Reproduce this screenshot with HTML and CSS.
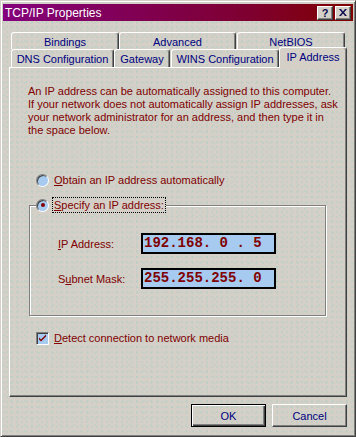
FILE: index.html
```html
<!DOCTYPE html>
<html>
<head>
<meta charset="utf-8">
<link rel="stylesheet" href="styles.css">
</head>
<body>
<div class="window">
  <div class="titlebar">
    <span class="title">TCP/IP Properties</span>
    <div class="tbtns">
      <span class="tbtn help">?</span>
      <span class="tbtn close"><svg width="8" height="7" viewBox="0 0 8 7"><path d="M0 0h2l2 2.5L6 0h2L5 3.5 8 7H6L4 4.5 2 7H0l3-3.5z" fill="#0a0a50"/></svg></span>
    </div>
  </div>
  <div class="content">
    <div class="tabs">
      <div class="tabrow back">
        <div class="tab t-bind">Bindings</div>
        <div class="tab t-adv">Advanced</div>
        <div class="tab t-net">NetBIOS</div>
      </div>
      <div class="tabrow front">
        <div class="tab t-dns">DNS Configuration</div>
        <div class="tab t-gw">Gateway</div>
        <div class="tab t-wins">WINS Configuration</div>
        <div class="tab t-ip sel">IP Address</div>
      </div>
    </div>
    <div class="panel">
      <p class="desc">An IP address can be automatically assigned to this computer.<br>If your network does not automatically assign IP addresses, ask<br>your network administrator for an address, and then type it in<br>the space below.</p>
      <div class="option">
        <span class="radio"></span>
        <span class="otext"><u>O</u>btain an IP address automatically</span>
      </div>
      <div class="group">
        <div class="legend">
          <span class="radio on"><span class="dot"></span></span>
          <span class="otext focus"><u>S</u>pecify an IP address:</span>
        </div>
        <div class="field first">
          <span class="lbl"><u>I</u>P Address:</span>
          <span class="ipbox">192.168. 0 . 5</span>
        </div>
        <div class="field">
          <span class="lbl">S<u>u</u>bnet Mask:</span>
          <span class="ipbox">255.255.255. 0</span>
        </div>
      </div>
      <div class="option check-row">
        <span class="check"><svg width="9" height="9" viewBox="0 0 9 9"><path d="M1 3.5l2 2 5-5v2l-5 5-2-2z" fill="#800000"/></svg></span>
        <span class="otext"><u>D</u>etect connection to network media</span>
      </div>
    </div>
    <div class="buttons">
      <div class="btn default"><span class="btn-in">OK</span></div>
      <div class="btn"><span class="btn-in">Cancel</span></div>
    </div>
  </div>
</div>
</body>
</html>
```

FILE: styles.css
```css
* { box-sizing: border-box; }
html, body { margin: 0; padding: 0; }
body {
  width: 356px;
  height: 437px;
  overflow: hidden;
  font-family: "Liberation Sans", Arial, sans-serif;
  font-size: 11px;
  background: #d4d0c8;
}
.window {
  width: 356px;
  height: 437px;
  border: 1px solid;
  border-color: #d4d0c8 #404040 #404040 #d4d0c8;
  box-shadow: inset 1px 1px #ffffff, inset -1px -1px #808080;
  padding: 3px 2px 2px 2px;
  display: flex;
  flex-direction: column;
  background-color: #d4d0c8;
  background-image:
    radial-gradient(circle at 1px 1px, rgba(120, 200, 190, 0.18) 0.7px, transparent 0.9px),
    radial-gradient(circle at 3px 4px, rgba(120, 200, 190, 0.15) 0.7px, transparent 0.9px);
  background-size: 5px 5px, 7px 6px;
}
.titlebar {
  height: 17px;
  background: linear-gradient(to right, #84007c, #7e0030 70%, #800000);
  display: flex;
  align-items: center;
  justify-content: space-between;
  padding: 0 2px 0 2px;
}
.title {
  color: #ffffff;
  font-size: 12px;
  line-height: 14px;
}
.tbtns { display: flex; gap: 2px; }
.tbtn {
  width: 16px;
  height: 14px;
  background: #d4d0c8;
  border: 1px solid;
  border-color: #ffffff #404040 #404040 #ffffff;
  box-shadow: inset -1px -1px #808080;
  display: flex;
  align-items: center;
  justify-content: center;
  color: #0a0a50;
  font-weight: bold;
  font-size: 11px;
  line-height: 12px;
}
.content {
  flex: 1;
  display: flex;
  flex-direction: column;
  padding: 0 6px;
}
.tabs {
  margin-top: 11px;
  display: flex;
  flex-direction: column;
}
.tabrow {
  display: flex;
  align-items: flex-end;
  padding-left: 2px;
}
.back { height: 17px; }
.front { height: 18px; }
.tab {
  height: 100%;
  border-top: 1px solid #ffffff;
  border-left: 1px solid #ffffff;
  border-right: 1px solid #404040;
  border-radius: 3px 3px 0 0;
  box-shadow: inset -1px 0 #808080;
  color: #000080;
  display: flex;
  align-items: center;
  justify-content: center;
  font-size: 11px;
  padding-top: 1px;
  background: transparent;
  white-space: nowrap;
}
.t-bind { width: 108px; }
.t-adv { width: 117px; }
.t-net { width: 108px; margin-left: 1px; }
.t-dns { width: 103px; }
.t-gw { width: 56px; }
.t-wins { width: 108px; margin-left: 1px; }
.t-ip { width: 68px; }
.tab.sel {
  height: 21px;
  margin-bottom: -1px;
  position: relative;
  z-index: 1;
  background-color: #d4d0c8;
  padding-bottom: 3px;
}
.panel {
  height: 330px;
  border: 1px solid;
  border-color: #ffffff #404040 #404040 #ffffff;
  box-shadow: inset -1px -1px #808080;
  padding: 17px 18px 0 18px;
  display: flex;
  flex-direction: column;
  align-items: flex-start;
}
.desc {
  margin: 0;
  color: #800000;
  line-height: 13px;
  font-size: 11px;
  white-space: nowrap;
}
.option {
  display: flex;
  align-items: center;
  height: 16px;
  margin-top: 35px;
  margin-left: 8px;
  color: #800000;
  white-space: nowrap;
}
.otext { margin-left: 5px; line-height: 14px; }
.radio {
  width: 13px;
  height: 13px;
  border-radius: 50%;
  border: 1px solid;
  border-color: #808080 #ffffff #ffffff #808080;
  background: #a6caf0;
  box-shadow: inset 1px 1px #404040;
  display: flex;
  align-items: center;
  justify-content: center;
}
.dot {
  width: 4px;
  height: 4px;
  border-radius: 50%;
  background: #800000;
}
.group {
  margin: 17px 1px 0 1px;
  width: 297px;
  border: 1px solid #808080;
  box-shadow: inset 1px 1px #ffffff, 1px 1px #ffffff;
  padding: 0 0 26px 0;
  display: flex;
  flex-direction: column;
  align-items: flex-start;
}
.legend {
  display: flex;
  align-items: center;
  height: 16px;
  margin-top: -9px;
  margin-left: 6px;
  padding-right: 1px;
  background-color: #d4d0c8;
  color: #800000;
  white-space: nowrap;
}
.legend .otext { margin-left: 4px; }
.focus {
  outline: 1px dotted #000000;
  outline-offset: 0;
  padding: 0 1px;
}
.field {
  display: flex;
  align-items: center;
  margin-top: 14px;
  margin-left: 28px;
  height: 21px;
}
.field.first { margin-top: 20px; }
.lbl {
  width: 83px;
  color: #800000;
}
.ipbox {
  width: 135px;
  height: 21px;
  border: 2px solid #000000;
  background: #a6caf0;
  color: #800000;
  font-family: "Liberation Mono", "Courier New", monospace;
  font-weight: bold;
  font-size: 14px;
  line-height: 17px;
  padding-left: 1px;
  white-space: pre;
}
.check-row { margin-top: 14px; }
.check {
  width: 13px;
  height: 13px;
  border: 1px solid;
  border-color: #808080 #ffffff #ffffff #808080;
  box-shadow: inset 1px 1px #404040;
  background: #a6caf0;
  display: flex;
  align-items: center;
  justify-content: center;
}
.check-row .otext { margin-left: 5px; }
.buttons {
  display: flex;
  justify-content: flex-end;
  gap: 6px;
  margin-top: 7px;
}
.btn {
  width: 75px;
  height: 23px;
  border: 1px solid;
  border-color: #ffffff #404040 #404040 #ffffff;
  box-shadow: inset -1px -1px #808080;
  display: flex;
  color: #000080;
}
.btn-in {
  flex: 1;
  display: flex;
  align-items: center;
  justify-content: center;
  font-size: 11px;
}
.btn.default {
  border: 1px solid #000000;
  box-shadow: inset 1px 1px #ffffff, inset -1px -1px #404040, inset -2px -2px #808080;
}
```
